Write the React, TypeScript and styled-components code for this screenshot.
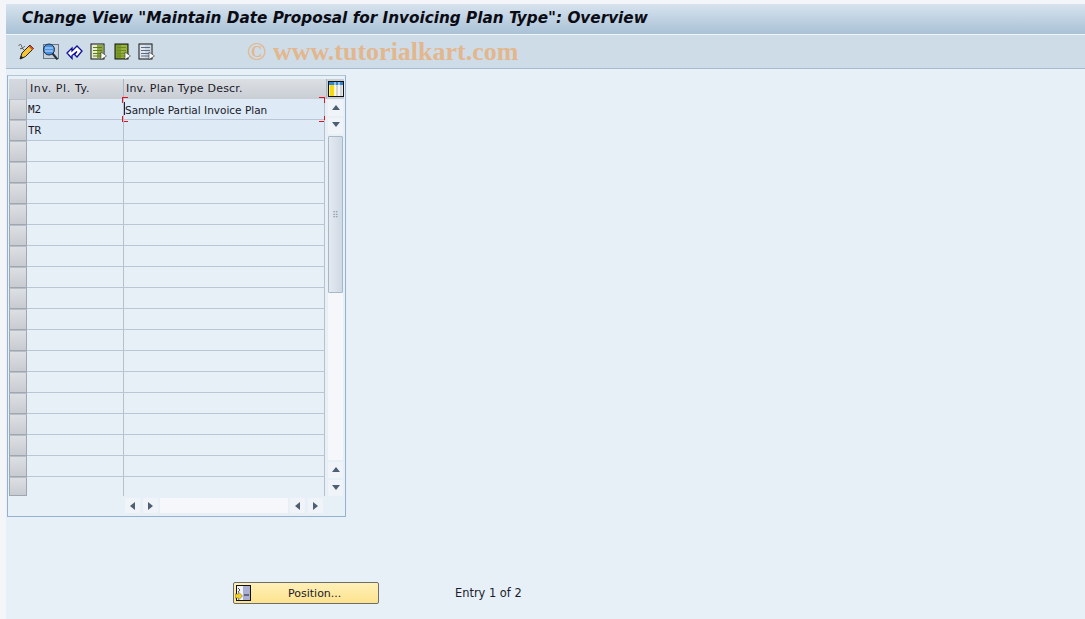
import styled, { createGlobalStyle } from 'styled-components';

const ROWS: { key: string; descr: string }[] = [
  { key: 'M2', descr: 'Sample Partial Invoice Plan' },
  { key: 'TR', descr: '' },
  ...Array.from({ length: 17 }, () => ({ key: '', descr: '' })),
];

const GlobalStyle = createGlobalStyle`
  html, body {
    margin: 0;
    padding: 0;
    width: 1085px;
    height: 619px;
    overflow: hidden;
    background: #f3f5f9;
  }
`;

const Screen = styled.div`
  width: 1079px;
  height: 615px;
  margin: 4px 0 0 6px;
  background: #e8f0f7;
  font-family: 'DejaVu Sans', sans-serif;
  color: #1a1a2a;
  display: flex;
  flex-direction: column;
`;

const TitleBar = styled.div`
  height: 31px;
  box-sizing: border-box;
  padding: 3px 0 0 16px;
  background: linear-gradient(#d7e3ee, #a9c1d6);
  border-bottom: 1px solid #f0f5f9;
  font: italic bold 15.25px 'DejaVu Sans', sans-serif;
  line-height: 22px;
  color: #0b0b14;
  white-space: nowrap;
`;

const Toolbar = styled.div`
  height: 34px;
  box-sizing: border-box;
  background: #cedce8;
  border-bottom: 1px solid #a9bccf;
  display: flex;
  align-items: center;
  padding-left: 12px;
`;

const ToolIcon = styled.svg`
  width: 17px;
  height: 17px;
  margin-right: 7px;
  flex: none;
`;

const Watermark = styled.span`
  margin-left: 85px;
  font: bold 26px 'Liberation Serif', serif;
  color: #e3b78d;
  white-space: nowrap;
`;

const Content = styled.div`
  flex: 1;
  display: flex;
  flex-direction: column;
  padding: 6px 0 0 1px;
`;

const TableFrame = styled.div`
  width: 339px;
  height: 442px;
  box-sizing: border-box;
  border: 1px solid #94b2cf;
  border-top-color: #b3c4d5;
  padding: 3px 2px 0 1px;
  display: grid;
  grid-template-columns: 18px 97px 201px 2px 17px;
  grid-template-rows: 20px 397px 20px;
`;

const Corner = styled.div`
  background: linear-gradient(#d5d9df, #c9ced6);
  border-right: 1px solid #a8b0ba;
  box-sizing: border-box;
`;

const HeadCell = styled.div<{ $span?: number; $inset: number; $tracking: number }>`
  grid-column: span ${(p) => p.$span ?? 1};
  background: linear-gradient(#dcdfe3, #c9ced5);
  border-right: 1px solid #aab6c4;
  box-sizing: border-box;
  padding-left: ${(p) => p.$inset}px;
  font-size: 11px;
  line-height: 20px;
  letter-spacing: ${(p) => p.$tracking}px;
  white-space: nowrap;
`;

const ColumnConfig = styled.div`
  background: #c9ced5;
  display: flex;
  align-items: center;
  justify-content: center;
`;

const Selectors = styled.div`
  display: flex;
  flex-direction: column;
  overflow: hidden;
`;

const Selector = styled.div`
  height: 21px;
  box-sizing: border-box;
  background: linear-gradient(#dcdfe3, #c8ccd2);
  border: 1px solid #9fa7b1;
  border-top-color: #b9bfc7;
  flex: none;
  &:last-child {
    height: 19px;
  }
`;

const Rows = styled.div`
  grid-column: span 2;
  display: flex;
  flex-direction: column;
`;

const Row = styled.div<{ $filled: boolean }>`
  height: 21px;
  flex: none;
  box-sizing: border-box;
  display: grid;
  grid-template-columns: 97px 201px;
  background: ${(p) => (p.$filled ? '#deeaf5' : 'transparent')};
  border-bottom: 1px solid #b8c6d6;
  &:last-child {
    height: 19px;
    border-bottom: none;
  }
`;

const Cell = styled.div<{ $focused?: boolean }>`
  position: relative;
  box-sizing: border-box;
  border-right: 1px solid #b8c0cc;
  padding: 1px 0 0 1px;
  font-family: ${(p) => (p.$focused ? "'DejaVu Sans', sans-serif" : "'DejaVu Sans Mono', monospace")};
  font-size: ${(p) => (p.$focused ? '10.5px' : '11px')};
  line-height: 20px;
  white-space: nowrap;
`;

const FocusCorner = styled.span<{ $v: 'top' | 'bottom'; $h: 'left' | 'right' }>`
  position: absolute;
  ${(p) => p.$v}: -2px;
  ${(p) => p.$h}: ${(p) => (p.$h === 'left' ? '-2px' : '-1px')};
  width: 5px;
  height: 5px;
  border-${(p) => p.$v}: 1px solid #e0101c;
  border-${(p) => p.$h}: 1px solid #e0101c;
`;

const Caret = styled.span`
  position: absolute;
  left: 0;
  top: 3px;
  width: 1px;
  height: 13px;
  background: #1a1a50;
`;

const VScroll = styled.div`
  grid-column: 5;
  display: flex;
  flex-direction: column;
  gap: 2px;
  padding-top: 1px;
`;

const ScrollBtn = styled.div<{ $lift: number }>`
  width: 15px;
  height: 16px;
  box-sizing: border-box;
  padding-bottom: ${(p) => p.$lift}px;
  background: #f0f4f8;
  display: flex;
  align-items: center;
  justify-content: center;
  flex: none;
  margin-left: 1px;
`;

const Arrow = styled.span<{ $dir: 'up' | 'down' | 'left' | 'right' }>`
  width: 0;
  height: 0;
  ${(p) =>
    p.$dir === 'up' || p.$dir === 'down'
      ? `border-left: 4.5px solid transparent; border-right: 4.5px solid transparent;
         border-${p.$dir === 'up' ? 'bottom' : 'top'}: 5px solid #4c5f73;`
      : `border-top: 4.5px solid transparent; border-bottom: 4.5px solid transparent;
         border-${p.$dir === 'left' ? 'right' : 'left'}: 5px solid #4c5f73;`}
`;

const VTrack = styled.div`
  flex: 1;
  margin-left: 1px;
  width: 15px;
  background: #f5f7fa;
  display: flex;
  flex-direction: column;
`;

const VThumb = styled.div`
  height: 157px;
  box-sizing: border-box;
  background: linear-gradient(90deg, #e4e9ef, #cfdae5);
  border: 1px solid #a9b8c8;
  border-radius: 1px;
  display: flex;
  align-items: center;
  justify-content: center;
  color: #8b9aaa;
  font-size: 9px;
`;

const HScroll = styled.div`
  grid-column: 3 / span 3;
  display: flex;
  align-items: flex-start;
  padding: 2px 0 0 1px;
  gap: 2px;
`;

const HBtn = styled.div`
  width: 15px;
  height: 15px;
  background: #f0f4f8;
  display: flex;
  align-items: center;
  justify-content: center;
  flex: none;
  & + & {
    margin-left: 1px;
  }
`;

const HTrack = styled.div`
  width: 128px;
  height: 15px;
  background: #f5f7fa;
  flex: none;
`;

const Footer = styled.div`
  display: flex;
  align-items: center;
  margin-top: 65px;
  padding-left: 226px;
`;

const PositionButton = styled.button`
  width: 146px;
  height: 22px;
  padding: 0;
  box-sizing: border-box;
  background: linear-gradient(#fff0b8, #fde38e);
  border: 1px solid #6d6d6d;
  border-radius: 2px;
  display: flex;
  align-items: center;
  font: 11px 'DejaVu Sans', sans-serif;
  color: #1a1a2a;
`;

const ButtonLabel = styled.span`
  margin-left: 37px;
`;

const EntryInfo = styled.span`
  margin-left: 76px;
  font-size: 11.4px;
`;

const Pencil = () => (
  <ToolIcon viewBox="0 0 17 17">
    <path d="M0.500 3c1-2 3-2 3 0s2 2 3.500 0M2 6c1-1 3-1 4 1" fill="none" stroke="#555" />
    <path d="M2 16l2-6 8-8 3.500 3.500-8 8z" fill="#f6c432" stroke="#222" />
    <path d="M2 16l1-3.500 2.500 2.500z" fill="#222" />
    <path d="M11.500 3l3.500 3.500" stroke="#d05030" strokeWidth="2" />
  </ToolIcon>
);

const Search = () => (
  <ToolIcon viewBox="0 0 17 17">
    <rect x="1.500" y="1.500" width="15" height="14" fill="#c9d2dc" stroke="#6a7888" />
    <circle cx="7" cy="6.500" r="5.500" fill="#4a90e0" stroke="#203040" />
    <path d="M3 5h8M3 8h8" stroke="#cfe4fa" />
    <path d="M10.500 10.500l5 6" stroke="#203040" strokeWidth="2" />
  </ToolIcon>
);

const Back = () => (
  <ToolIcon viewBox="0 0 17 17">
    <path d="M1 10l5-5v3l5-5 5 5-5 6-2.500-2.500 2.500-3-5 4v3z" fill="#fff" stroke="#10109a" strokeWidth="1.300" />
  </ToolIcon>
);

const DocIcon = ({ fill, panel, lines }: { fill: string; panel: string; lines: string }) => (
  <ToolIcon viewBox="0 0 17 17">
    <rect x="1" y="1" width="13" height="15" fill={fill} stroke="#111" />
    <rect x="7" y="2" width="6" height="13" fill={panel} />
    <path d="M3 4.500h9M3 7.500h9M3 10.500h9M3 13h9" stroke={lines} />
    <path d="M11 9l5.500 4-5.500 3.500z" fill="#fff" stroke="#333" strokeWidth="0.600" />
  </ToolIcon>
);

const ColumnIcon = () => (
  <svg width="16" height="16" viewBox="0 0 16 16">
    <rect x="0.500" y="0.500" width="15" height="15" fill="#fff" stroke="#111" />
    <rect x="1" y="1" width="14" height="3" fill="#2f86d6" />
    <rect x="1.500" y="4" width="5" height="11" fill="#f6da10" />
    <rect x="7.500" y="4" width="3" height="11" fill="#d4d4d4" />
    <rect x="11.500" y="4" width="3" height="11" fill="#d4d4d4" />
    <path d="M7 1v14M11 1v14" stroke="#fff" />
  </svg>
);

const PositionIcon = () => (
  <svg width="16" height="16" viewBox="0 0 16 16" style={{ marginLeft: 1 }}>
    <rect x="1.500" y="0.500" width="14" height="15" fill="#aab0d4" stroke="#111" />
    <rect x="2" y="1" width="6" height="14" fill="#f4f4f4" />
    <path d="M9 10h5" stroke="#222" />
    <path d="M3 3l2 2-2 2" fill="none" stroke="#555" />
    <path d="M0 9h3.500V7l4 4-4 4v-2H0z" fill="#f4d020" stroke="#555" strokeWidth="0.500" />
  </svg>
);

export default function App() {
  return (
    <>
      <GlobalStyle />
      <Screen>
        <TitleBar>Change View "Maintain Date Proposal for Invoicing Plan Type": Overview</TitleBar>
        <Toolbar>
          <Pencil />
          <Search />
          <Back />
          <DocIcon fill="#e6ecd0" panel="#8fa83c" lines="#5e7a20" />
          <DocIcon fill="#7c9a2a" panel="#9ab23e" lines="#6a8a22" />
          <DocIcon fill="#dfe6ee" panel="#c9d6e4" lines="#5a6a80" />
          <Watermark>© www.tutorialkart.com</Watermark>
        </Toolbar>
        <Content>
          <TableFrame>
            <Corner />
            <HeadCell $inset={3} $tracking={0.6}>Inv. Pl. Ty.</HeadCell>
            <HeadCell $span={2} $inset={2} $tracking={0.2}>Inv. Plan Type Descr.</HeadCell>
            <ColumnConfig>
              <ColumnIcon />
            </ColumnConfig>
            <Selectors>
              {ROWS.map((_, i) => (
                <Selector key={i} />
              ))}
            </Selectors>
            <Rows>
              {ROWS.map((row, i) => (
                <Row key={i} $filled={i < 2}>
                  <Cell>{row.key}</Cell>
                  <Cell $focused={i === 0}>
                    {row.descr}
                    {i === 0 && (
                      <>
                        <Caret />
                        <FocusCorner $v="top" $h="left" />
                        <FocusCorner $v="bottom" $h="left" />
                        <FocusCorner $v="top" $h="right" />
                        <FocusCorner $v="bottom" $h="right" />
                      </>
                    )}
                  </Cell>
                </Row>
              ))}
            </Rows>
            <VScroll>
              <ScrollBtn $lift={2}>
                <Arrow $dir="up" />
              </ScrollBtn>
              <ScrollBtn $lift={4}>
                <Arrow $dir="down" />
              </ScrollBtn>
              <VTrack>
                <VThumb>⠿</VThumb>
              </VTrack>
              <ScrollBtn $lift={2}>
                <Arrow $dir="up" />
              </ScrollBtn>
              <ScrollBtn $lift={2}>
                <Arrow $dir="down" />
              </ScrollBtn>
            </VScroll>
            <HScroll>
              <HBtn>
                <Arrow $dir="left" />
              </HBtn>
              <HBtn>
                <Arrow $dir="right" />
              </HBtn>
              <HTrack />
              <HBtn>
                <Arrow $dir="left" />
              </HBtn>
              <HBtn>
                <Arrow $dir="right" />
              </HBtn>
            </HScroll>
          </TableFrame>
          <Footer>
            <PositionButton>
              <PositionIcon />
              <ButtonLabel>Position...</ButtonLabel>
            </PositionButton>
            <EntryInfo>Entry 1 of 2</EntryInfo>
          </Footer>
        </Content>
      </Screen>
    </>
  );
}
